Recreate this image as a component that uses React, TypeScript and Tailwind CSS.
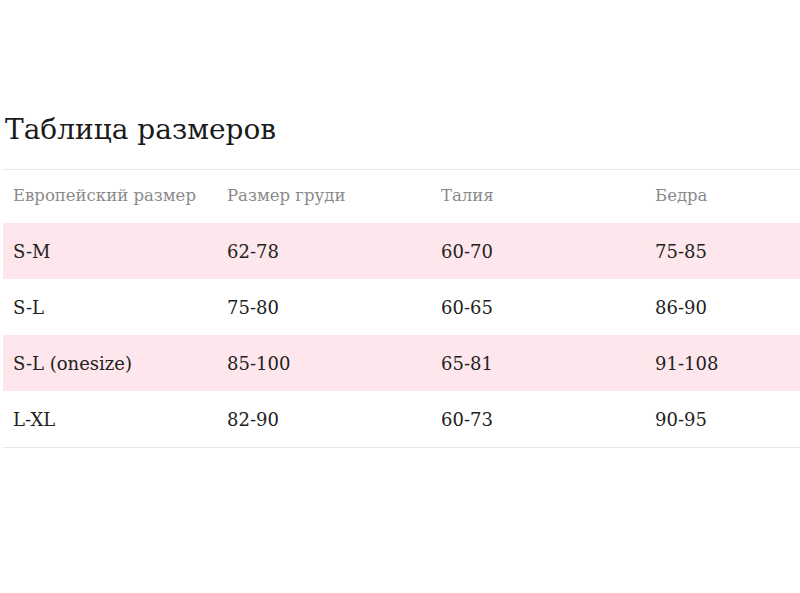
const rows = [
  ["S-M", "62-78", "60-70", "75-85"],
  ["S-L", "75-80", "60-65", "86-90"],
  ["S-L (onesize)", "85-100", "65-81", "91-108"],
  ["L-XL", "82-90", "60-73", "90-95"],
];

const headers = ["Европейский размер", "Размер груди", "Талия", "Бедра"];

export default function App() {
  return (
    <div className="w-full h-[593px] overflow-hidden bg-white font-['DejaVu_Serif',serif] text-[#222]">
      <div className="pt-[110px] pl-[3px]">
        <h2 className="pl-[2px] text-[28px] leading-[40px] text-[#1a1a1a]">Таблица размеров</h2>
        <div className="mt-[19px] w-[856px] border-t border-b border-[#e6e6e6]">
          <div className="grid grid-cols-4 h-[53px] items-center">
            {headers.map((h) => (
              <div key={h} className="pl-[10px] text-[16.5px] text-[#8a8a8a]">
                {h}
              </div>
            ))}
          </div>
          {rows.map((r, i) => (
            <div
              key={r[0]}
              className={
                i % 2 === 0
                  ? "grid grid-cols-4 h-[56px] items-center bg-[#fee7ec]"
                  : "grid grid-cols-4 h-[56px] items-center"
              }
            >
              {r.map((c, j) => (
                <div key={j} className="pl-[10px] text-[18px]">
                  {c}
                </div>
              ))}
            </div>
          ))}
        </div>
      </div>
    </div>
  );
}
